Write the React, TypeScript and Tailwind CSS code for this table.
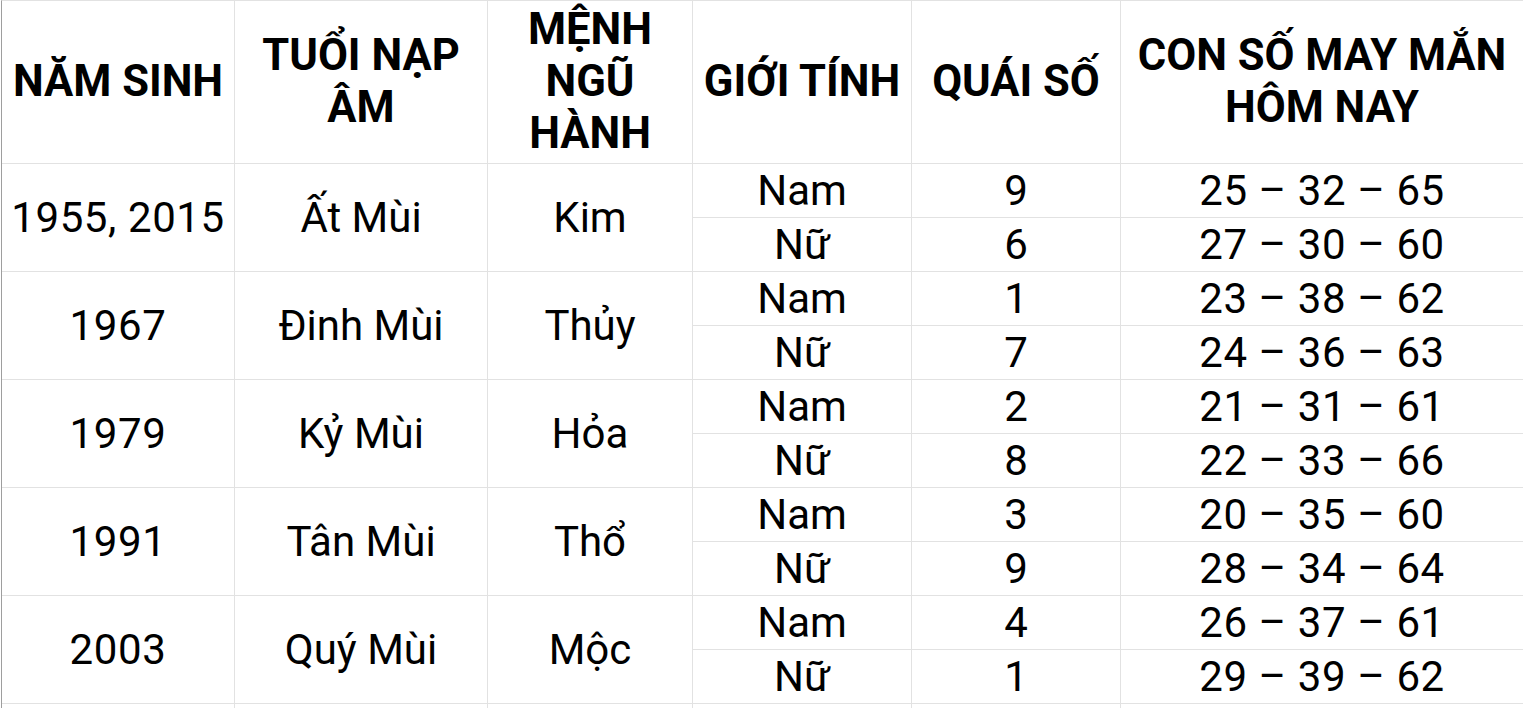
const rows = [
  {
    year: "1955, 2015",
    tuoi: "Ất Mùi",
    menh: "Kim",
    nam: { so: "9", lucky: "25 – 32 – 65" },
    nu: { so: "6", lucky: "27 – 30 – 60" },
  },
  {
    year: "1967",
    tuoi: "Đinh Mùi",
    menh: "Thủy",
    nam: { so: "1", lucky: "23 – 38 – 62" },
    nu: { so: "7", lucky: "24 – 36 – 63" },
  },
  {
    year: "1979",
    tuoi: "Kỷ Mùi",
    menh: "Hỏa",
    nam: { so: "2", lucky: "21 – 31 – 61" },
    nu: { so: "8", lucky: "22 – 33 – 66" },
  },
  {
    year: "1991",
    tuoi: "Tân Mùi",
    menh: "Thổ",
    nam: { so: "3", lucky: "20 – 35 – 60" },
    nu: { so: "9", lucky: "28 – 34 – 64" },
  },
  {
    year: "2003",
    tuoi: "Quý Mùi",
    menh: "Mộc",
    nam: { so: "4", lucky: "26 – 37 – 61" },
    nu: { so: "1", lucky: "29 – 39 – 62" },
  },
]

const cell =
  "flex items-center justify-center text-center border-r border-b border-[#e2e2e2]"

function Head({ lines }: { lines: string[] }) {
  return (
    <div className={`${cell} font-bold text-[43.5px] leading-[52px]`}>
      <div>
        {lines.map((l) => (
          <div key={l}>{l}</div>
        ))}
      </div>
    </div>
  )
}

export default function App() {
  return (
    <div className="w-[1523px] h-[708px] overflow-hidden bg-white text-black font-['Roboto',sans-serif]">
      <div className="ml-px w-[1522px] border-l border-t border-l-[#9e9e9e] border-t-[#e2e2e2] grid grid-cols-[233px_253px_205px_219px_209px_403px] grid-rows-[163px_repeat(11,54px)]">
        <Head lines={["NĂM SINH"]} />
        <Head lines={["TUỔI NẠP", "ÂM"]} />
        <Head lines={["MỆNH", "NGŨ", "HÀNH"]} />
        <Head lines={["GIỚI TÍNH"]} />
        <Head lines={["QUÁI SỐ"]} />
        <Head lines={["CON SỐ MAY MẮN", "HÔM NAY"]} />

        {rows.map((r) => (
          <div key={r.year} className="contents text-[42px] leading-none">
            <div className={`${cell} row-span-2 tracking-[0.6px]`}>{r.year}</div>
            <div className={`${cell} row-span-2`}>{r.tuoi}</div>
            <div className={`${cell} row-span-2`}>{r.menh}</div>
            <div className={cell}>Nam</div>
            <div className={cell}>{r.nam.so}</div>
            <div className={`${cell} tracking-[0.6px]`}>{r.nam.lucky}</div>
            <div className={cell}>Nữ</div>
            <div className={cell}>{r.nu.so}</div>
            <div className={`${cell} tracking-[0.6px]`}>{r.nu.lucky}</div>
          </div>
        ))}

        {Array.from({ length: 6 }).map((_, i) => (
          <div key={i} className={cell} />
        ))}
      </div>
    </div>
  )
}
